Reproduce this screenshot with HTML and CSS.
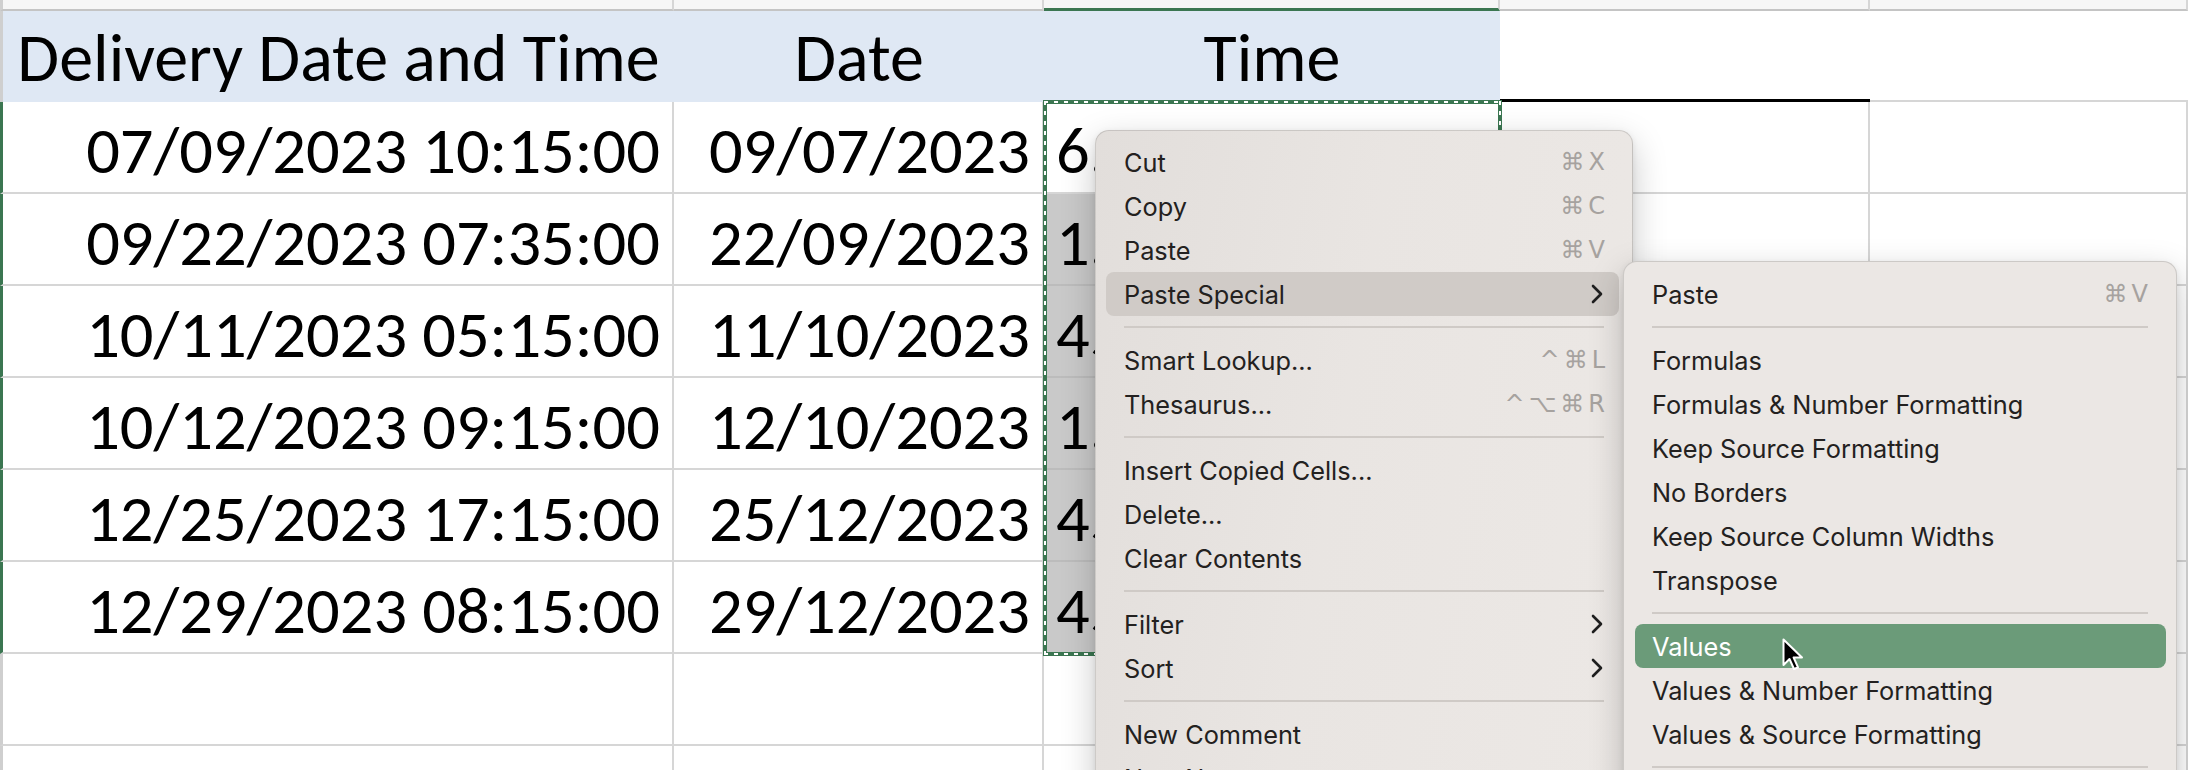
FILE: index.html
```html
<!DOCTYPE html>
<html lang="en">
<head>
<meta charset="utf-8">
<title>Paste Special</title>
<link rel="stylesheet" href="styles.css">
</head>
<body>
<div class="stage">
  <div class="sheet">
    <!-- top strip -->
    <div class="cell strip first"></div>
    <div class="cell strip"></div>
    <div class="cell strip strip-sel"></div>
    <div class="cell strip"></div>
    <div class="cell strip"></div>
    <!-- header -->
    <div class="cell head first center">Delivery Date and Time</div>
    <div class="cell head center">Date</div>
    <div class="cell head center">Time</div>
    <div class="cell head-d"></div>
    <div class="cell head-e"></div>
    <!-- data rows -->
    <div class="cell first sel-row right">07/09/2023 10:15:00</div>
    <div class="cell right">09/07/2023</div>
    <div class="cell left active">6.42</div>
    <div class="cell"></div>
    <div class="cell"></div>

    <div class="cell first sel-row right">09/22/2023 07:35:00</div>
    <div class="cell right">22/09/2023</div>
    <div class="cell left shaded">1.32</div>
    <div class="cell"></div>
    <div class="cell"></div>

    <div class="cell first sel-row right">10/11/2023 05:15:00</div>
    <div class="cell right">11/10/2023</div>
    <div class="cell left shaded">45210.22</div>
    <div class="cell"></div>
    <div class="cell"></div>

    <div class="cell first sel-row right">10/12/2023 09:15:00</div>
    <div class="cell right">12/10/2023</div>
    <div class="cell left shaded">1.39</div>
    <div class="cell"></div>
    <div class="cell"></div>

    <div class="cell first sel-row right">12/25/2023 17:15:00</div>
    <div class="cell right">25/12/2023</div>
    <div class="cell left shaded">45285.72</div>
    <div class="cell"></div>
    <div class="cell"></div>

    <div class="cell first sel-row right">12/29/2023 08:15:00</div>
    <div class="cell right">29/12/2023</div>
    <div class="cell left shaded">45289.34</div>
    <div class="cell"></div>
    <div class="cell"></div>

    <div class="cell first"></div>
    <div class="cell"></div>
    <div class="cell"></div>
    <div class="cell"></div>
    <div class="cell"></div>

    <div class="cell first"></div>
    <div class="cell"></div>
    <div class="cell"></div>
    <div class="cell"></div>
    <div class="cell"></div>
  </div>

  <div class="marquee"></div>

  <div class="menu main-menu">
    <div class="item"><span>Cut</span><span class="key">⌘X</span></div>
    <div class="item"><span>Copy</span><span class="key">⌘C</span></div>
    <div class="item"><span>Paste</span><span class="key">⌘V</span></div>
    <div class="item hover"><span>Paste Special</span><svg class="chev" viewBox="0 0 12 20" width="12" height="20"><polyline points="2,2 10,10 2,18" fill="none" stroke="#1f1f1f" stroke-width="2.6" stroke-linecap="round" stroke-linejoin="round"/></svg></div>
    <div class="sep"></div>
    <div class="item"><span>Smart Lookup...</span><span class="key">^⌘L</span></div>
    <div class="item"><span>Thesaurus...</span><span class="key">^⌥⌘R</span></div>
    <div class="sep"></div>
    <div class="item"><span>Insert Copied Cells...</span></div>
    <div class="item"><span>Delete...</span></div>
    <div class="item"><span>Clear Contents</span></div>
    <div class="sep"></div>
    <div class="item"><span>Filter</span><svg class="chev" viewBox="0 0 12 20" width="12" height="20"><polyline points="2,2 10,10 2,18" fill="none" stroke="#1f1f1f" stroke-width="2.6" stroke-linecap="round" stroke-linejoin="round"/></svg></div>
    <div class="item"><span>Sort</span><svg class="chev" viewBox="0 0 12 20" width="12" height="20"><polyline points="2,2 10,10 2,18" fill="none" stroke="#1f1f1f" stroke-width="2.6" stroke-linecap="round" stroke-linejoin="round"/></svg></div>
    <div class="sep"></div>
    <div class="item"><span>New Comment</span></div>
    <div class="item"><span>New Note</span></div>
  </div>

  <div class="menu sub-menu">
    <div class="item"><span>Paste</span><span class="key">⌘V</span></div>
    <div class="sep"></div>
    <div class="item"><span>Formulas</span></div>
    <div class="item"><span>Formulas &amp; Number Formatting</span></div>
    <div class="item"><span>Keep Source Formatting</span></div>
    <div class="item"><span>No Borders</span></div>
    <div class="item"><span>Keep Source Column Widths</span></div>
    <div class="item"><span>Transpose</span></div>
    <div class="sep"></div>
    <div class="item chosen"><span>Values</span></div>
    <div class="item"><span>Values &amp; Number Formatting</span></div>
    <div class="item"><span>Values &amp; Source Formatting</span></div>
    <div class="sep"></div>
  </div>

  <svg class="cursor" viewBox="0 0 22 34" width="22" height="34">
    <path d="M1.5 1.5 L1.5 27 L7.5 21 L12 31 L16 29.3 L11.6 19.5 L20 19.5 Z" fill="#000" stroke="#fff" stroke-width="2" stroke-linejoin="round"/>
  </svg>
</div>
</body>
</html>
```

FILE: styles.css
```css
* { box-sizing: border-box; }

html, body {
  margin: 0;
  padding: 0;
  width: 2188px;
  height: 770px;
  overflow: hidden;
  background: #ffffff;
}

.stage {
  position: relative;
  width: 2188px;
  height: 770px;
  overflow: hidden;
}

.sheet {
  display: grid;
  grid-template-columns: 674px 370px 456px 370px 318px;
  grid-template-rows: 11px 91px repeat(8, 92px);
  font-family: Carlito, "Liberation Sans Narrow", "Liberation Sans", sans-serif;
  font-size: 66.5px;
  color: #000;
}

.cell {
  border-right: 2px solid #d6d6d6;
  border-bottom: 2px solid #d6d6d6;
  background: #fff;
  display: flex;
  align-items: flex-end;
  line-height: 1;
  padding-bottom: 8px;
  white-space: nowrap;
  overflow: hidden;
}

.cell.first { border-left: 3px solid #cfcfcf; }
.cell.first.sel-row { border-left: 3px solid #3b7651; }

.strip {
  background: #f6f6f6;
  border-bottom: 2px solid #c4c4c4;
  padding: 0;
}
.strip-sel { border-bottom: 3px solid #3b7651; }

.head {
  background: #dfe8f4;
  border-right: none;
  border-bottom: none;
  padding-bottom: 10px;
  font-size: 68px;
}
.head.first { border-left: 3px solid #cfcfcf; }
.head-d {
  border-right: none;
  border-bottom: 3px solid #000;
}
.head-e { border-right: none; }

.center { justify-content: center; }
.right { justify-content: flex-end; padding-right: 12px; }
.left { justify-content: flex-start; padding-left: 12px; }

.shaded { background: #c9c9c9; border-bottom-color: #bcbcbc; }
.active { background: #fff; }

.marquee {
  position: absolute;
  left: 1043px;
  top: 100px;
  width: 459px;
  height: 556px;
  border: 4px solid #3b7651;
  pointer-events: none;
}
.marquee::after {
  content: "";
  position: absolute;
  inset: -3px;
  background:
    repeating-linear-gradient(90deg, #ffffff 0 4px, transparent 4px 10px) top left / 100% 2px no-repeat,
    repeating-linear-gradient(90deg, #ffffff 0 4px, transparent 4px 10px) bottom left / 100% 2px no-repeat,
    repeating-linear-gradient(180deg, #ffffff 0 4px, transparent 4px 10px) top left / 2px 100% no-repeat,
    repeating-linear-gradient(180deg, #ffffff 0 4px, transparent 4px 10px) top right / 2px 100% no-repeat;
}

.menu {
  position: absolute;
  border-radius: 14px;
  border: 1px solid rgba(0, 0, 0, 0.13);
  box-shadow: 0 12px 34px rgba(0, 0, 0, 0.22), 0 2px 6px rgba(0, 0, 0, 0.08);
  font-family: Inter, "Liberation Sans", "DejaVu Sans", sans-serif;
  font-size: 25.3px;
  color: #232120;
  overflow: hidden;
}

.main-menu {
  left: 1095px;
  top: 130px;
  width: 538px;
  height: 700px;
  padding-top: 9px;
  background: linear-gradient(100deg, #e2dedb 0%, #e9e5e2 45%, #ece8e5 100%);
}

.sub-menu {
  left: 1623px;
  top: 261px;
  width: 554px;
  height: 560px;
  padding-top: 10px;
  background: #ebe7e4;
}

.item {
  height: 44px;
  display: flex;
  align-items: center;
  justify-content: space-between;
  border-radius: 8px;
  margin: 0 13px 0 10px;
  padding: 0 14px 0 18px;
}

.sub-menu .item {
  margin: 0 10px 0 11px;
  padding: 0 18px 0 17px;
}

.item.hover { background: #d0cbc7; }
.item.chosen { background: #6b9b79; color: #fff; }

.key {
  color: #a6a29f;
  font-family: "DejaVu Sans", Inter, sans-serif;
  letter-spacing: 4px;
  margin-right: -4px;
  font-size: 24px;
}

.chev { display: block; margin-right: 2px; }

.sep {
  height: 22px;
  margin: 0 28px;
  display: flex;
  align-items: center;
}
.sep::before {
  content: "";
  display: block;
  width: 100%;
  height: 2px;
  background: #cfcac6;
}

.cursor {
  position: absolute;
  left: 1782px;
  top: 638px;
}
```
